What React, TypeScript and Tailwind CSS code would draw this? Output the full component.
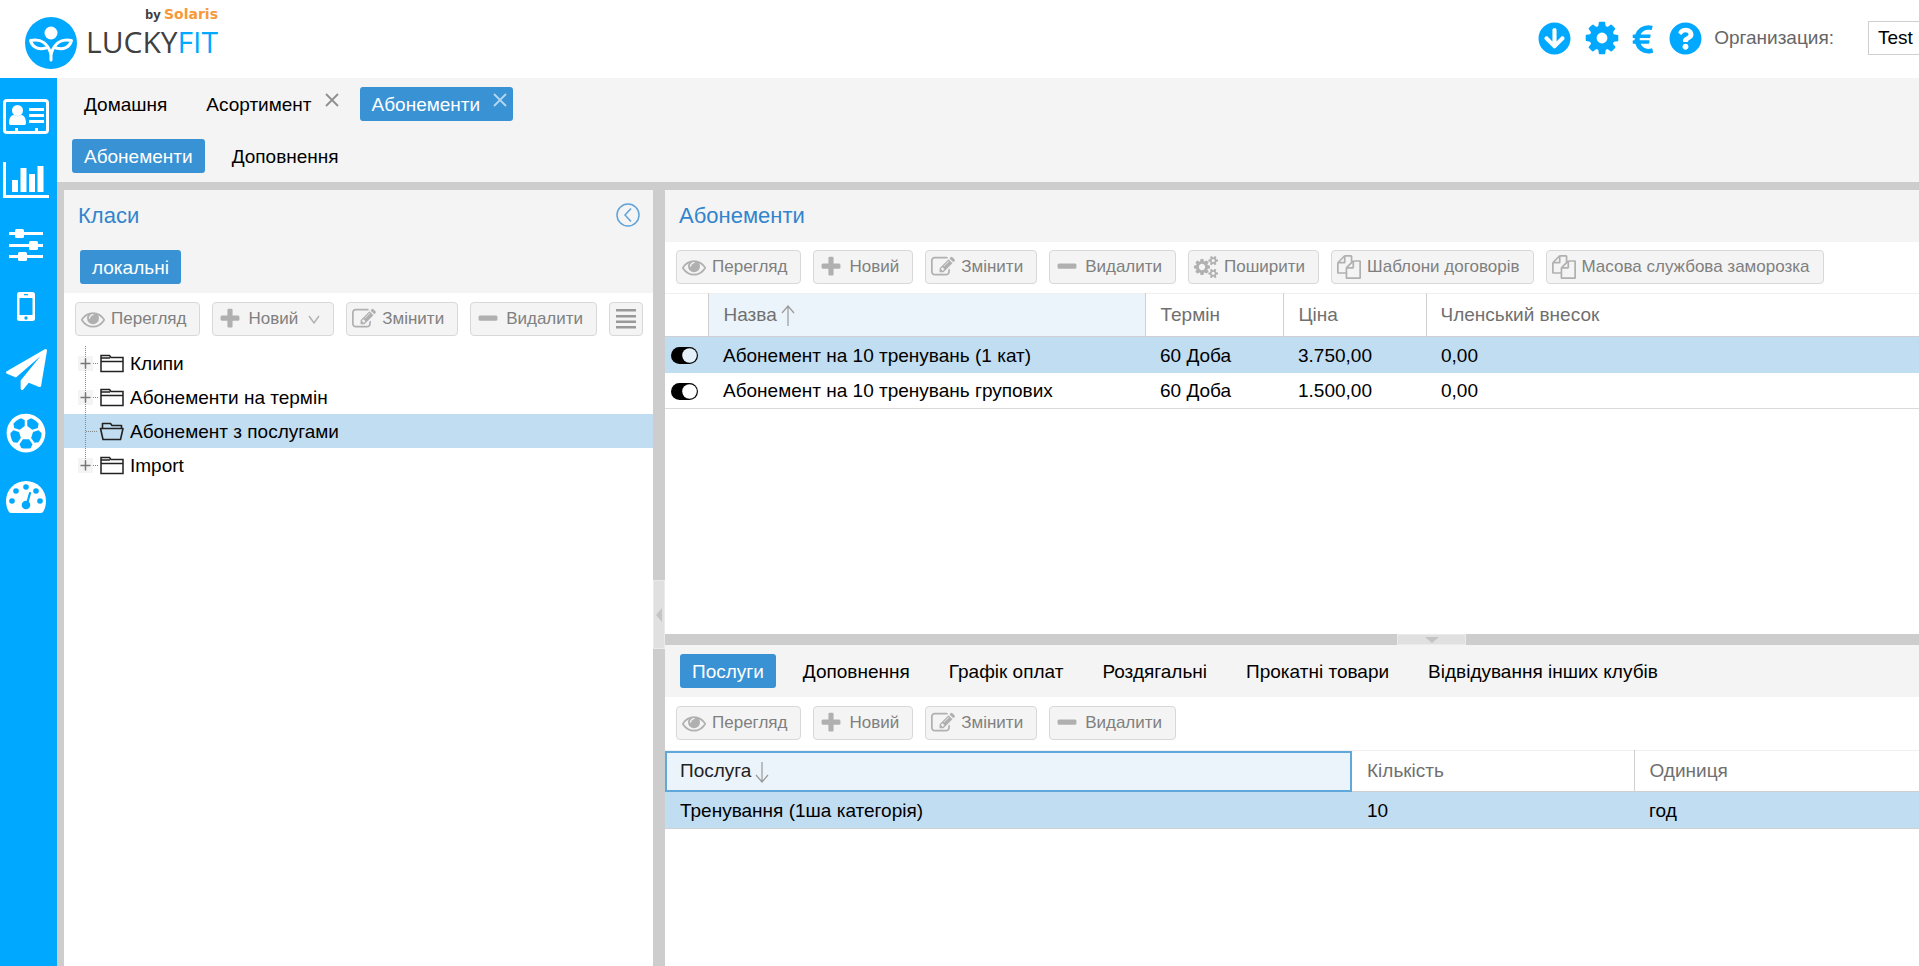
import { ReactNode } from "react";
import { FaArrowCircleDown, FaQuestionCircle, FaRegFutbol } from "react-icons/fa";

const eye =
  "M1664 960q-152-236-381-353 61 104 61 225 0 185-131.5 316.5t-316.5 131.5-316.5-131.5-131.5-316.5q0-121 61-225-229 117-381 353 133 205 333.5 326.5t434.5 121.5 434.5-121.5 333.5-326.5zm-720-384q0-20-14-34t-34-14q-125 0-214.5 89.5t-89.5 214.5q0 20 14 34t34 14 34-14 14-34q0-86 61-147t147-61q20 0 34-14t14-34zm848 384q0 34-20 69-140 230-376.5 368.5t-499.5 138.5-499.5-139-376.5-368q-20-35-20-69t20-69q140-229 376.5-368t499.5-139 499.5 139 376.5 368q20 35 20 69z";
const plus =
  "M1600 736v192q0 40-28 68t-68 28h-416v416q0 40-28 68t-68 28h-192q-40 0-68-28t-28-68v-416h-416q-40 0-68-28t-28-68v-192q0-40 28-68t68-28h416v-416q0-40 28-68t68-28h192q40 0 68 28t28 68v416h416q40 0 68 28t28 68z";
const minus =
  "M1600 736v192q0 40-28 68t-68 28h-1216q-40 0-68-28t-28-68v-192q0-40 28-68t68-28h1216q40 0 68 28t28 68z";
const edit =
  "M888 1184l116-116-152-152-116 116v56h96v96h56zm440-720q-16-16-33 1l-350 350q-17 17-1 33t33-1l350-350q17-17 1-33zm80 594v190q0 119-84.5 203.5t-203.5 84.5h-832q-119 0-203.5-84.5t-84.5-203.5v-832q0-119 84.5-203.5t203.5-84.5h832q63 0 117 25 15 7 18 23 3 17-9 29l-49 49q-14 14-32 8-23-6-45-6h-832q-66 0-113 47t-47 113v832q0 66 47 113t113 47h832q66 0 113-47t47-113v-126q0-13 9-22l64-64q15-15 35-7t20 29zm-96-738l288 288-672 672h-288v-288zm444 132l-92 92-288-288 92-92q28-28 68-28t68 28l152 152q28 28 28 68t-28 68z";
const files =
  "M1696 384q40 0 68 28t28 68v1216q0 40-28 68t-68 28h-960q-40 0-68-28t-28-68v-288h-544q-40 0-68-28t-28-68v-672q0-40 20-88t48-76l408-408q28-28 76-48t88-20h416q40 0 68 28t28 68v328q68-40 128-40h416zm-544 213l-299 299h299v-299zm-640-384l-299 299h299v-299zm196 647l316-316v-416h-384v416q0 40-28 68t-68 28h-416v640h512v-256q0-40 20-88t48-76zm956 804v-1152h-384v416q0 40-28 68t-68 28h-416v640h896z";
const cog =
  "M1152 896q0-106-75-181t-181-75-181 75-75 181 75 181 181 75 181-75 75-181zm512-109v222q0 12-8 23t-20 13l-185 28q-19 54-39 91 35 50 107 138 10 12 10 25t-9 23q-27 37-99 108t-94 71q-12 0-26-9l-138-108q-44 23-91 38-16 136-29 186-7 28-36 28h-222q-14 0-24.5-8.5t-11.5-21.5l-28-184q-49-16-90-37l-141 107q-10 9-25 9-14 0-25-11-126-114-165-168-7-10-7-23 0-12 8-23 15-21 51-66.5t54-70.5q-27-50-41-99l-183-27q-13-2-21-12.5t-8-23.5v-222q0-12 8-23t19-13l186-28q14-46 39-92-40-57-107-138-10-12-10-24 0-10 9-23 26-36 98.5-107.5t94.5-71.5q13 0 26 10l138 107q44-23 91-38 16-136 29-186 7-28 36-28h222q14 0 24.5 8.5t11.5 21.5l28 184q49 16 90 37l142-107q9-9 24-9 13 0 25 10 129 119 165 170 7 8 7 22 0 12-8 23-15 21-51 66.5t-54 70.5q26 50 41 98l183 28q13 2 21 12.5t8 23.5z";
const cogs =
  "M896 896q0-106-75-181t-181-75-181 75-75 181 75 181 181 75 181-75 75-181zm768 512q0-52-38-90t-90-38-90 38-38 90q0 53 37.5 90.5t90.5 37.5 90.5-37.5 37.5-90.5zm0-1024q0-52-38-90t-90-38-90 38-38 90q0 53 37.5 90.5t90.5 37.5 90.5-37.5 37.5-90.5zm-384 421v185q0 10-7 19.5t-16 10.5l-155 24q-11 35-32 76 34 48 90 115 7 11 7 20 0 12-7 19-23 30-82.5 89.5t-78.5 59.5q-11 0-21-7l-115-90q-37 19-77 31-11 108-23 155-7 24-30 24h-186q-11 0-20-7.5t-10-17.5l-23-153q-34-10-75-31l-118 89q-7 7-20 7-11 0-21-8-144-133-144-160 0-9 7-19 10-14 41-53t47-61q-23-44-35-82l-152-24q-10-1-17-9.5t-7-19.5v-185q0-10 7-19.5t16-10.5l155-24q11-35 32-76-34-48-90-115-7-11-7-20 0-12 7-20 22-30 82-89t79-59q11 0 21 7l115 90q34-18 77-32 11-108 23-154 7-24 30-24h186q11 0 20 7.5t10 17.5l23 153q34 10 75 31l118-89q8-7 20-7 11 0 21 8 144 133 144 160 0 8-7 19-12 16-42 54t-45 60q23 48 34 82l152 23q10 2 17 10.5t7 19.5zm640 533v140q0 16-149 31-12 27-30 52 51 113 51 138 0 4-4 7-122 71-124 71-8 0-46-47t-52-68q-20 2-30 2t-30-2q-14 21-52 68t-46 47q-2 0-124-71-4-3-4-7 0-25 51-138-18-25-30-52-149-15-149-31v-140q0-16 149-31 13-29 30-52-51-113-51-138 0-4 4-7 4-2 35-20t59-34 30-16q8 0 46 46.5t52 67.5q20-2 30-2t30 2q51-71 92-112l6-2q4 0 124 70 4 3 4 7 0 25-51 138 17 23 30 52 149 15 149 31zm0-1024v140q0 16-149 31-12 27-30 52 51 113 51 138 0 4-4 7-122 71-124 71-8 0-46-47t-52-68q-20 2-30 2t-30-2q-14 21-52 68t-46 47q-2 0-124-71-4-3-4-7 0-25 51-138-18-25-30-52-149-15-149-31v-140q0-16 149-31 13-29 30-52-51-113-51-138 0-4 4-7 4-2 35-20t59-34 30-16q8 0 46 46.5t52 67.5q20-2 30-2t30 2q51-71 92-112l6-2q4 0 124 70 4 3 4 7 0 25-51 138 17 23 30 52 149 15 149 31z";
const euro =
  "M1360 1437l35 159q3 12-3 22.5t-17 14.5l-5 1q-4 2-10.5 3.5t-16 4.5-21.5 5.5-25.5 5-30 5-33.5 4.5-36.5 3-38.5 1q-234 0-409-130.5t-238-351.5h-95q-13 0-22.5-9.5t-9.5-22.5v-113q0-13 9.5-22.5t22.5-9.5h66q-2-57 1-105h-67q-14 0-23-9t-9-23v-114q0-14 9-23t23-9h98q67-210 243.5-338t400.5-128q102 0 194 23 11 3 20 15 6 11 3 24l-43 159q-3 13-14 19.5t-24 2.5l-4-1q-4-1-11.5-2.5l-17.5-3.5-22.5-3.5-26-3-29-2.5-29.5-1q-126 0-226 64t-150 176h468q16 0 25 12 10 12 7 26l-24 114q-5 26-32 26h-488q-3 37 0 105h459q15 0 25 12 9 12 6 27l-24 112q-2 11-11 18.5t-20 7.5h-387q48 117 149.5 185.5t228.5 68.5q18 0 36-1.5t33.5-3.5 29.5-4.5 24.5-5 18.5-4.5l12-3 5-2q13-5 26 2 12 7 15 21z";
const plane =
  "M1764 11q33 24 27 64l-256 1536q-5 29-32 45-14 8-31 8-11 0-24-5l-453-185-242 295q-18 23-49 23-13 0-22-4-19-7-30.5-23.5t-11.5-36.5v-349l864-1059-1069 925-395-162q-37-14-40-55-2-40 32-59l1664-960q15-9 32-9 20 0 36 11z";

function Glyph({ d, className, box = "0 0 1792 1792" }: { d: string; className: string; box?: string }) {
  return (
    <svg viewBox={box} fill="currentColor" className={className} aria-hidden="true">
      <path d={d} />
    </svg>
  );
}

const toolIcon = (d: string, box?: string) => <Glyph d={d} box={box} className="size-6 shrink-0 text-[#b0b0b0]" />;

/* ---------- buttons ---------- */

function ToolButton({ icon, label, menu }: { icon: ReactNode; label: string; menu?: boolean }) {
  return (
    <button
      type="button"
      className="flex h-[34px] items-center gap-[6px] rounded-[4px] border border-[#d8d8d8] bg-[#f4f4f4] pr-[13px] pl-[5px] text-[17px] text-[#808080]"
    >
      {icon}
      <span className="whitespace-nowrap">{label}</span>
      {menu && (
        <svg viewBox="0 0 12 9" className="ml-1 h-[9px] w-3" fill="none" stroke="#b0b0b0" strokeWidth="1.4">
          <path d="M1 1l5 7 5-7" />
        </svg>
      )}
    </button>
  );
}

function BaseTools({ menu }: { menu?: boolean }) {
  return (
    <>
      <ToolButton icon={toolIcon(eye)} label="Перегляд" />
      <ToolButton icon={toolIcon(plus)} label="Новий" menu={menu} />
      <ToolButton icon={toolIcon(edit)} label="Змінити" />
      <ToolButton icon={toolIcon(minus)} label="Видалити" />
    </>
  );
}

function Tab({ label, active, closable }: { label: string; active?: boolean; closable?: boolean }) {
  return (
    <button
      type="button"
      className={`relative h-[34px] rounded-[3px] pt-[2px] text-[19px] whitespace-nowrap ${
        active ? "bg-[#3892d4] text-white" : "text-black"
      } ${closable ? "pr-[33px] pl-3" : "px-3"}`}
    >
      {label}
      {closable && (
        <svg
          viewBox="0 0 14 14"
          className="absolute top-[6px] right-[6px] size-[14px]"
          fill="none"
          stroke={active ? "#b5d6ef" : "#909090"}
          strokeWidth="1.8"
        >
          <path d="M1 1l12 12M13 1L1 13" />
        </svg>
      )}
    </button>
  );
}

/* ---------- header ---------- */

function Logo() {
  return (
    <div className="flex items-start gap-[9px] pt-[7px]">
      <svg viewBox="0 0 52 52" className="mt-[10px] size-[52px]">
        <circle cx="26" cy="26" r="26" fill="#00a8ff" />
        <circle cx="26" cy="16" r="6.5" fill="#fff" />
        <g fill="none" stroke="#fff" strokeWidth="3" strokeLinejoin="round" strokeLinecap="round">
          <path d="M26 43V37C23 27 16 21 5.5 23.500c2 7 8 9.500 15.500 7.500" />
          <path d="M26 37c3-10 10-16 20.500-13.500-2 7-8 9.500-15.500 7.500" />
        </g>
      </svg>
      <div>
        <div className="text-right font-['Open_Sans'] text-[13px] leading-[14px] font-bold text-[#404040]">
          by <span className="font-['DejaVu_Sans'] text-[14px] text-[#f7993a]">Solaris</span>
        </div>
        <div className="font-['Open_Sans'] text-[30px] leading-[42px] text-[#404040]">
          LUCKY<span className="text-[#00a8ff]">FIT</span>
        </div>
      </div>
    </div>
  );
}

function Header() {
  return (
    <header className="flex h-[78px] shrink-0 justify-between bg-white pl-[25px]">
      <Logo />
      <div className="flex h-[76px] items-center text-[#00a8ff]">
        <button type="button" aria-label="Завантажити" className="mr-3">
          <FaArrowCircleDown className="size-[33px]" />
        </button>
        <button type="button" aria-label="Налаштування" className="mr-1">
          <Glyph d={cog} className="size-[38px]" />
        </button>
        <button type="button" aria-label="Валюта" className="mr-2">
          <Glyph d={euro} className="size-9" />
        </button>
        <button type="button" aria-label="Довідка" className="mr-3">
          <FaQuestionCircle className="size-[33px]" />
        </button>
        <label htmlFor="org" className="mr-[34px] text-[19px] text-[#666]">
          Организация:
        </label>
        <input
          id="org"
          defaultValue="Test"
          className="h-[34px] w-[51px] border border-r-0 border-[#cfcfcf] bg-white pl-[9px] text-[19px] text-black"
        />
      </div>
    </header>
  );
}

/* ---------- sidebar ---------- */

function Sidebar() {
  return (
    <nav className="flex w-[57px] shrink-0 flex-col items-center bg-[#00a8ff] pt-[21px] pr-[5px] text-white">
      <a href="#clients" aria-label="Клієнти">
        <svg viewBox="0 0 46 35" className="h-[35px] w-[46px]" fill="#fff">
          <rect x="1.5" y="1.5" width="43" height="32" rx="2.5" fill="none" stroke="#fff" strokeWidth="3" />
          <circle cx="14.500" cy="11.500" r="5.500" />
          <path d="M6 24c0-5 2-8 5-8 2 1.500 5 1.500 7 0 3 0 5 3 5 8 0 1.500-1 2-2 2H8c-1 0-2-.5-2-2z" />
          <path d="M26 9h15v3H26zM26 15h15v3H26zM26 21h15v3H26zM12 29h3v4h-3zM32 29h3v4h-3z" />
        </svg>
      </a>
      <a href="#reports" aria-label="Звіти" className="mt-7">
        <svg viewBox="0 0 46 36" className="h-9 w-[46px]" fill="#fff">
          <path d="M0 0h3v33h43v3H0zM9 18h6v12H9zM17.500 6h6v24h-6zM26 12h6v18h-6zM34.500 4h6v26h-6z" />
        </svg>
      </a>
      <a href="#settings" aria-label="Параметри" className="mt-[31px]">
        <svg viewBox="0 0 34 33" className="h-[33px] w-[34px]" fill="#fff">
          <path d="M0 3h34v3H0zM0 15h34v3H0zM0 26h34v3H0z" />
          <rect x="6" y="0" width="9" height="9" rx="1.500" />
          <rect x="20" y="12" width="9" height="9" rx="1.500" />
          <rect x="9" y="23" width="9" height="9" rx="1.500" />
        </svg>
      </a>
      <a href="#mobile" aria-label="Додаток" className="mt-[30px]">
        <svg viewBox="0 0 18 29" className="h-[29px] w-[18px]">
          <rect width="18" height="29" rx="2.500" fill="#fff" />
          <path d="M2.500 6h13v17h-13zM7 2h4v1.200H7z" fill="#00a8ff" />
          <circle cx="9" cy="26" r="1.700" fill="#00a8ff" />
        </svg>
      </a>
      <a href="#mailing" aria-label="Розсилка" className="mt-7">
        <Glyph d={plane} className="size-[41px]" />
      </a>
      <a href="#sport" aria-label="Тренування" className="mt-[23px]">
        <FaRegFutbol className="size-10" />
      </a>
      <a href="#dashboard" aria-label="Панель" className="mt-7">
        <svg viewBox="0 0 40 32" className="h-8 w-10">
          <path d="M3 31C1 28 0 24 0 20a20 20 0 0140 0c0 4-1 8-3 11q-1 1-2 1H5q-1 0-2-1z" fill="#fff" />
          <g fill="#00a8ff">
            <circle cx="6" cy="20" r="2.800" />
            <circle cx="10" cy="10" r="2.800" />
            <circle cx="20" cy="6" r="2.800" />
            <circle cx="30" cy="10" r="2.800" />
            <circle cx="34" cy="20" r="2.800" />
            <circle cx="20" cy="24" r="4.300" />
          </g>
          <path d="M21 23l3-11" stroke="#00a8ff" strokeWidth="2.200" strokeLinecap="round" />
        </svg>
      </a>
    </nav>
  );
}

/* ---------- classes tree ---------- */

const classes = [
  { name: "Клипи" },
  { name: "Абонементи на термін" },
  { name: "Абонемент з послугами", open: true },
  { name: "Import", last: true },
];

function TreeBranch({ open, last }: { open?: boolean; last?: boolean }) {
  return (
    <svg viewBox="0 0 52 34" className="h-[34px] w-[52px] shrink-0" fill="none" aria-hidden="true">
      {!open && <path d="M0 10h15v15H0z" fill="#f4f4f4" />}
      <path d={last ? "M7.500 0v17" : "M7.500 0v34"} stroke="#888" strokeDasharray="1 1" />
      <path d={open ? "M8 17.500h12" : "M15 17.500h5"} stroke="#888" strokeDasharray="1 1" />
      {!open && <path d="M2.500 17.500h10M7.500 12.500v10" stroke="#777" strokeWidth="1.500" />}
      {open ? (
        <path
          d="M24.500 14V9.500h8l1.500 2h9.500V14M22.500 14.500h22.500l-2.500 11H25z"
          stroke="#222"
          strokeWidth="1.600"
          strokeLinejoin="round"
        />
      ) : (
        <path d="M23 25.500v-16h8.500l1.500 2h12v14zM23 12h9M23 15.500h22" stroke="#222" strokeWidth="1.500" />
      )}
    </svg>
  );
}

function ClassesPanel() {
  return (
    <section className="flex w-[589px] shrink-0 flex-col bg-white">
      <div className="bg-[#f4f4f4] pb-[9px]">
        <div className="flex h-[52px] items-center justify-between pr-[13px] pb-[2px] pl-[14px]">
          <h2 className="text-[22px] text-[#3284cc]">Класи</h2>
          <button type="button" aria-label="Згорнути">
            <svg viewBox="0 0 24 24" className="size-6" fill="none" stroke="#5fa3d8" strokeWidth="1.500">
              <circle cx="12" cy="12" r="11" />
              <path d="M15 5.500L9 12l6 6.500" />
            </svg>
          </button>
        </div>
        <div className="pt-2 pl-4">
          <Tab label="локальні" active />
        </div>
      </div>
      <div className="flex gap-3 pt-[9px] pb-[10px] pl-[11px]">
        <BaseTools menu />
        <button
          type="button"
          aria-label="Меню"
          className="flex size-[34px] items-center justify-center rounded-[4px] border border-[#d8d8d8] bg-[#f4f4f4]"
        >
          <svg viewBox="0 0 20 20" className="size-5" fill="#999">
            <path d="M0 0h20v2.500H0zM0 6h20v2.500H0zM0 11.500h20V14H0zM0 17h20v2.500H0z" />
          </svg>
        </button>
      </div>
      <ul>
        {classes.map((c) => (
          <li
            key={c.name}
            className={`flex h-[34px] items-center pl-[14px] text-[19px] text-black ${c.open ? "bg-[#c1ddf1]" : ""}`}
          >
            <TreeBranch open={c.open} last={c.last} />
            <span className="pt-[2px]">{c.name}</span>
          </li>
        ))}
      </ul>
    </section>
  );
}

/* ---------- subscriptions ---------- */

const subscriptions = [
  { name: "Абонемент на 10 тренувань (1 кат)", term: "60 Доба", price: "3.750,00", fee: "0,00" },
  { name: "Абонемент на 10 тренувань групових", term: "60 Доба", price: "1.500,00", fee: "0,00" },
];

const headCell = "border-r border-[#d0d0d0] pl-[15px] text-left font-normal";
const cell = "pt-[2px] pl-[15px]";

function SortArrow({ down }: { down?: boolean }) {
  return (
    <svg
      viewBox="0 0 14 22"
      className="ml-1 inline h-[22px] w-[14px] align-middle"
      fill="none"
      stroke="#999"
      strokeWidth="1.200"
    >
      <path d={down ? "M7 1v20M1 14l6 7 6-7" : "M7 21V1M1 8l6-7 6 7"} />
    </svg>
  );
}

function SubscriptionsPanel() {
  return (
    <section className="h-[444px] shrink-0 bg-white">
      <h2 className="flex h-[52px] items-center bg-[#f4f4f4] pb-[2px] pl-[14px] text-[22px] text-[#3284cc]">
        Абонементи
      </h2>
      <div className="flex gap-3 pt-2 pb-[9px] pl-[11px]">
        <BaseTools />
        <ToolButton icon={toolIcon(cogs, "0 0 1920 1792")} label="Поширити" />
        <ToolButton icon={toolIcon(files)} label="Шаблони договорів" />
        <ToolButton icon={toolIcon(files)} label="Масова службова заморозка" />
      </div>
      <table className="w-full table-fixed border-collapse text-[19px]">
        <colgroup>
          <col className="w-[43px]" />
          <col className="w-[437px]" />
          <col className="w-[138px]" />
          <col className="w-[143px]" />
          <col />
        </colgroup>
        <thead>
          <tr className="h-[43px] border-t border-b border-t-[#f0f0f0] border-b-[#cfcfcf] text-[#707070]">
            <th className="border-r border-[#d0d0d0]" />
            <th className={`${headCell} bg-[#ecf4fb]`}>
              Назва
              <SortArrow />
            </th>
            <th className={headCell}>Термін</th>
            <th className={headCell}>Ціна</th>
            <th className="pl-[14px] text-left font-normal">Членський внесок</th>
          </tr>
        </thead>
        <tbody className="text-black">
          {subscriptions.map((s, i) => (
            <tr key={s.name} className={`h-9 ${i === 0 ? "bg-[#c1ddf1]" : "border-b border-[#dadada]"}`}>
              <td className="pt-[2px] pl-[6px]">
                <svg viewBox="0 0 27 17" className="h-[17px] w-[27px]">
                  <rect width="27" height="17" rx="8.500" fill="#000" />
                  <circle cx="18.500" cy="8.500" r="7.300" className={i === 0 ? "fill-[#e4f1fa]" : "fill-white"} />
                </svg>
              </td>
              <td className={cell}>{s.name}</td>
              <td className={cell}>{s.term}</td>
              <td className={cell}>{s.price}</td>
              <td className={cell}>{s.fee}</td>
            </tr>
          ))}
        </tbody>
      </table>
    </section>
  );
}

/* ---------- services ---------- */

const serviceTabs = ["Послуги", "Доповнення", "Графік оплат", "Роздягальні", "Прокатні товари", "Відвідування інших клубів"];

function ServicesPanel() {
  return (
    <section className="flex-1 bg-white">
      <div className="flex h-[52px] items-center gap-[15px] bg-[#f4f4f4] pl-[15px]">
        {serviceTabs.map((t, i) => (
          <Tab key={t} label={t} active={i === 0} />
        ))}
      </div>
      <div className="flex gap-3 pt-[9px] pb-[10px] pl-[11px]">
        <BaseTools />
      </div>
      <table className="w-full table-fixed border-collapse text-[19px]">
        <colgroup>
          <col className="w-[687px]" />
          <col className="w-[282px]" />
          <col />
        </colgroup>
        <thead>
          <tr className="h-[41px] border-t border-b border-t-[#f0f0f0] border-b-[#cfcfcf] text-[#707070]">
            <th className="bg-[#ecf4fb] pl-[15px] text-left font-normal text-[#222] outline-2 -outline-offset-2 outline-[#5fa8dc]">
              Послуга
              <SortArrow down />
            </th>
            <th className={headCell}>Кількість</th>
            <th className="pl-[15px] text-left font-normal">Одиниця</th>
          </tr>
        </thead>
        <tbody className="text-black">
          <tr className="h-[37px] border-b border-[#d0d0d0] bg-[#c1ddf1]">
            <td className={cell}>Тренування (1ша категорія)</td>
            <td className={cell}>10</td>
            <td className={cell}>год</td>
          </tr>
        </tbody>
      </table>
    </section>
  );
}

export default function App() {
  return (
    <div className="flex h-screen flex-col overflow-hidden bg-white font-['Liberation_Sans',sans-serif]">
      <Header />
      <div className="flex min-h-0 flex-1">
        <Sidebar />
        <main className="flex min-w-0 flex-1 flex-col bg-[#f4f4f4]">
          <div className="flex h-[52px] shrink-0 items-center gap-[15px] pl-[15px]">
            <Tab label="Домашня" />
            <Tab label="Асортимент" closable />
            <Tab label="Абонементи" active closable />
          </div>
          <div className="flex h-[52px] shrink-0 items-center gap-[15px] pl-[15px]">
            <Tab label="Абонементи" active />
            <Tab label="Доповнення" />
          </div>
          <div className="flex min-h-0 flex-1 bg-[#cdcdcd] pt-2 pl-[7px]">
            <ClassesPanel />
            <div className="flex w-3 shrink-0 flex-col pt-[390px]">
              <button
                type="button"
                aria-label="Згорнути класи"
                className="flex h-[69px] items-center justify-center border border-[#eaeaea] bg-[#e0e0e0]"
              >
                <svg viewBox="0 0 6 14" className="h-[14px] w-[6px]" fill="#c4c4c4">
                  <path d="M6 0v14L0 7z" />
                </svg>
              </button>
            </div>
            <div className="flex min-w-0 flex-1 flex-col">
              <SubscriptionsPanel />
              <div className="flex h-[11px] shrink-0 justify-center pl-[279px]">
                <button
                  type="button"
                  aria-label="Згорнути послуги"
                  className="flex w-[69px] items-center justify-center border border-[#eaeaea] bg-[#e0e0e0]"
                >
                  <svg viewBox="0 0 14 6" className="h-[6px] w-[14px]" fill="#c4c4c4">
                    <path d="M0 0h14L7 6z" />
                  </svg>
                </button>
              </div>
              <ServicesPanel />
            </div>
          </div>
        </main>
      </div>
    </div>
  );
}
